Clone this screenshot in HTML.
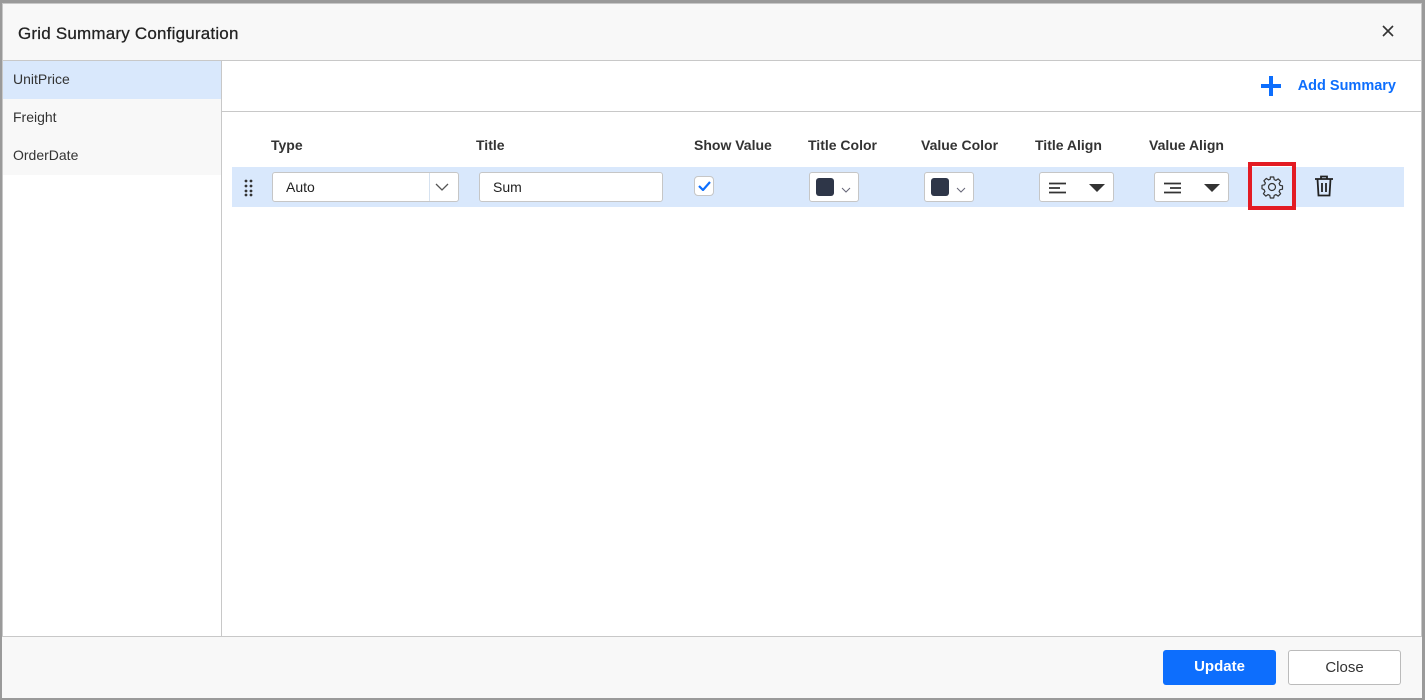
<!DOCTYPE html>
<html><head><style>
*{box-sizing:border-box;margin:0;padding:0}
body{width:1425px;height:700px;background:#9a9a9a;font-family:"Liberation Sans",Roboto,sans-serif;position:relative;overflow:hidden}
.dlg{position:absolute;left:2px;top:3px;width:1420px;height:695px;background:#fff;border:1px solid #c8c8c8}
.hdr{position:absolute;left:0;top:0;width:100%;height:57px;background:#f8f8f8;border-bottom:1px solid #c8c8c8}
.hdr h1{position:absolute;left:15px;top:20px;font-size:17px;font-weight:normal;color:#222;letter-spacing:.2px;-webkit-text-stroke:.25px #222}
.x{position:absolute;right:27px;top:21px}
.left{position:absolute;left:0;top:57px;width:219px;height:576px;border-right:1px solid #c8c8c8;background:#fff}
.item{height:38px;line-height:37px;padding-left:10px;font-size:14px;color:#333;background:#f8f8f8}
.item.sel{background:#d9e8fc}
.top{position:absolute;left:219px;top:57px;right:0;height:51px;border-bottom:1px solid #c8c8c8}
.add{position:absolute;right:25px;top:17px;font-size:14.5px;font-weight:bold;color:#0d6efd}
.plus{position:absolute;right:140px;top:15px;width:20px;height:20px}
.plus:before{content:"";position:absolute;left:8px;top:0;width:4px;height:20px;background:#0d6efd}
.plus:after{content:"";position:absolute;left:0;top:8px;width:20px;height:4px;background:#0d6efd}
.th{position:absolute;top:133px;font-size:14px;font-weight:bold;color:#333}
.row{position:absolute;left:232px;top:167px;width:1172px;height:40px;background:#d9e8fc}
.box{position:absolute;background:#fff;border:1px solid #c6c6c6;border-radius:3px;font-size:14px;color:#222}
.sw{position:absolute;left:6px;top:5px;width:18px;height:18px;background:#2e3648;border-radius:3px}
.ftr{position:absolute;left:0;bottom:0;width:100%;height:62px;background:#f8f8f8;border-top:1px solid #c8c8c8}
.btn{position:absolute;top:13px;height:35px;border-radius:3px;font-size:15px;text-align:center;line-height:33px}
</style></head><body>
<div class="dlg">
<div class="hdr"><h1>Grid Summary Configuration</h1><svg class="x" width="12" height="12"><path d="M1 1l10 10M11 1L1 11" stroke="#333" stroke-width="1.6"/></svg></div>
<div class="left"><div class="item sel">UnitPrice</div><div class="item">Freight</div><div class="item">OrderDate</div></div>
<div class="top"><div class="plus"></div><div class="add">Add Summary</div></div>
<div class="th" style="left:268px">Type</div>
<div class="th" style="left:473px">Title</div>
<div class="th" style="left:691px">Show Value</div>
<div class="th" style="left:805px">Title Color</div>
<div class="th" style="left:918px">Value Color</div>
<div class="th" style="left:1032px">Title Align</div>
<div class="th" style="left:1146px">Value Align</div>
</div>
<div class="row">
<svg style="position:absolute;left:12px;top:12px" width="10" height="18"><g fill="#333"><circle cx="2" cy="2" r="1.4"/><circle cx="7" cy="2" r="1.4"/><circle cx="2" cy="7" r="1.4"/><circle cx="7" cy="7" r="1.4"/><circle cx="2" cy="12" r="1.4"/><circle cx="7" cy="12" r="1.4"/><circle cx="2" cy="16" r="1.4"/><circle cx="7" cy="16" r="1.4"/></g></svg>
<div class="box" style="left:40px;top:5px;width:187px;height:30px"><span style="position:absolute;left:13px;top:6px">Auto</span><div style="position:absolute;left:156px;top:0;width:1px;height:28px;background:#d6e2f0"></div><svg style="position:absolute;left:162px;top:10px" width="14" height="8"><path d="M1 1l6 6 6-6" stroke="#555" fill="none" stroke-width="1.3"/></svg></div>
<div class="box" style="left:247px;top:5px;width:184px;height:30px"><span style="position:absolute;left:13px;top:6px">Sum</span></div>
<div class="box" style="left:462px;top:9px;width:20px;height:20px;border-radius:4px"><svg style="position:absolute;left:3px;top:4px" width="13" height="10"><path d="M1 5l4 4 7-8" stroke="#0d6efd" fill="none" stroke-width="2.2"/></svg></div>
<div class="box" style="left:577px;top:5px;width:50px;height:30px"><div class="sw"></div><svg style="position:absolute;left:31px;top:14px" width="10" height="6"><path d="M1 1l4 4 4-4" stroke="#667" fill="none"/></svg></div>
<div class="box" style="left:692px;top:5px;width:50px;height:30px"><div class="sw"></div><svg style="position:absolute;left:31px;top:14px" width="10" height="6"><path d="M1 1l4 4 4-4" stroke="#667" fill="none"/></svg></div>
<div class="box" style="left:807px;top:5px;width:75px;height:30px"><svg style="position:absolute;left:9px;top:9px" width="60" height="12"><path d="M0 1.5h17M0 6h11M0 10.5h17" stroke="#333" stroke-width="1.8"/><path d="M40 2h16l-8 8z" fill="#333"/></svg></div>
<div class="box" style="left:922px;top:5px;width:75px;height:30px"><svg style="position:absolute;left:9px;top:9px" width="60" height="12"><path d="M0 1.5h17M6 6h11M0 10.5h17" stroke="#333" stroke-width="1.8"/><path d="M40 2h16l-8 8z" fill="#333"/></svg></div>
<div style="position:absolute;left:1016px;top:-5px;width:48px;height:48px;border:4px solid #e31b23"></div>
<svg style="position:absolute;left:1028px;top:8px" width="24" height="24" viewBox="0 0 24 24"><path d="M10.3 2h3.4l.5 2.6 1.8.8 2.2-1.5 2.4 2.4-1.5 2.2.8 1.8 2.6.5v3.4l-2.6.5-.8 1.8 1.5 2.2-2.4 2.4-2.2-1.5-1.8.8-.5 2.6h-3.4l-.5-2.6-1.8-.8-2.2 1.5-2.4-2.4 1.5-2.2-.8-1.8L2 13.7v-3.4l2.6-.5.8-1.8-1.5-2.2 2.4-2.4 2.2 1.5 1.8-.8z" fill="none" stroke="#333" stroke-width="1.2" stroke-linejoin="round"/><circle cx="12" cy="12" r="3.5" fill="none" stroke="#333" stroke-width="1.2"/></svg>
<svg style="position:absolute;left:1082px;top:8px" width="20" height="22" viewBox="0 0 20 22"><path d="M1 4h18M7 4V1.5h6V4M3.5 4l1 16.5h11l1-16.5M8 8v9M12 8v9" fill="none" stroke="#222" stroke-width="1.8"/></svg>
</div>
<div class="dlg" style="background:none;border:none;pointer-events:none">
<div class="ftr">
<div class="btn" style="left:1161px;width:113px;background:#0d6efd;color:#fff;font-weight:bold">Update</div>
<div class="btn" style="left:1286px;width:113px;background:#fff;border:1px solid #bbb;color:#333">Close</div>
</div></div>
</body></html>
